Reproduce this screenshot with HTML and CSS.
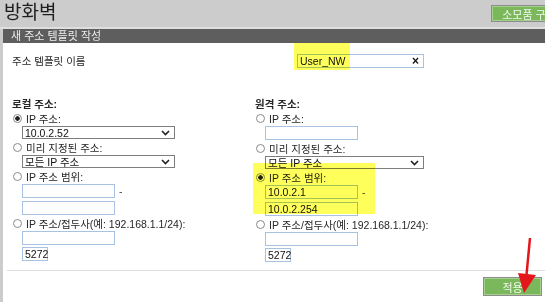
FILE: index.html
```html
<!DOCTYPE html>
<html lang="ko">
<head>
    <meta charset="UTF-8">
    <title>방화벽</title>
    <link rel="stylesheet" href="styles.css">
</head>
<body>
    <div class="top">
        <h1>방화벽</h1>
        <button class="btn-green top-btn">소모품 구매</button>
    </div>

    <div class="panel">
        <div class="panel-head">새 주소 템플릿 작성</div>

        <!-- template name -->
        <div class="name-row">
            <span>주소 템플릿 이름</span>
            <div class="text-box name-box">
                <span>User_NW</span>
                <span class="clear">×</span>
            </div>
        </div>

        <div class="cols">
            <!-- local -->
            <div class="col">
                <div class="col-title">로컬 주소:</div>
                <div class="opt"><span class="radio checked"></span>IP 주소:</div>
                <div class="fields">
                    <div class="select w153"><span>10.0.2.52</span><svg width="9" height="6" viewBox="0 0 9 6"><polyline points="1,1 4.5,4.5 8,1" fill="none" stroke="#222" stroke-width="1.6"/></svg></div>
                </div>
                <div class="opt"><span class="radio"></span>미리 지정된 주소:</div>
                <div class="fields">
                    <div class="select w153"><span>모든 IP 주소</span><svg width="9" height="6" viewBox="0 0 9 6"><polyline points="1,1 4.5,4.5 8,1" fill="none" stroke="#222" stroke-width="1.6"/></svg></div>
                </div>
                <div class="opt"><span class="radio"></span>IP 주소 범위:</div>
                <div class="fields">
                    <div class="range-row"><div class="text-box w93"></div><span class="dash">-</span></div>
                    <div class="text-box w93"></div>
                </div>
                <div class="opt"><span class="radio"></span>IP 주소/접두사(예: 192.168.1.1/24):</div>
                <div class="fields fields-tight">
                    <div class="text-box w93"></div>
                    <div class="text-box w26"><span>5272</span></div>
                </div>
            </div>

            <!-- remote -->
            <div class="col">
                <div class="col-title">원격 주소:</div>
                <div class="opt"><span class="radio"></span>IP 주소:</div>
                <div class="fields">
                    <div class="text-box w93"></div>
                </div>
                <div class="opt"><span class="radio"></span>미리 지정된 주소:</div>
                <div class="fields">
                    <div class="select w159"><span>모든 IP 주소</span><svg width="9" height="6" viewBox="0 0 9 6"><polyline points="1,1 4.5,4.5 8,1" fill="none" stroke="#222" stroke-width="1.6"/></svg></div>
                </div>
                <div class="opt"><span class="radio checked"></span>IP 주소 범위:</div>
                <div class="fields">
                    <div class="range-row"><div class="text-box w93"><span>10.0.2.1</span></div><span class="dash">-</span></div>
                    <div class="text-box w93"><span>10.0.2.254</span></div>
                </div>
                <div class="opt"><span class="radio"></span>IP 주소/접두사(예: 192.168.1.1/24):</div>
                <div class="fields fields-tight">
                    <div class="text-box w93"></div>
                    <div class="text-box w26"><span>5272</span></div>
                </div>
            </div>
        </div>

        <div class="actions">
            <button class="btn-green apply-btn">적용</button>
        </div>
    </div>

    <!-- annotations -->
    <div class="hl hl-name"></div>
    <div class="hl hl-range"></div>
    <svg class="arrow" width="545" height="302" viewBox="0 0 545 302">
        <line x1="530" y1="238" x2="526" y2="280" stroke="#e3161d" stroke-width="2.5"/>
        <polygon points="518,273 536,275 524,293" fill="#e3161d"/>
    </svg>
</body>
</html>
```

FILE: styles.css
```css
body {
    margin: 0;
    width: 545px;
    height: 302px;
    overflow: hidden;
    position: relative;
    background: #cccccc;
    font-family: "Liberation Sans", "Noto Sans CJK KR", sans-serif;
    font-size: 10.5px;
    color: #262626;
}
.top {
    height: 27px;
    display: flex;
    justify-content: space-between;
    align-items: flex-start;
    padding-left: 4px;
    border-bottom: 2px solid #dedede;
}
h1 {
    margin: 0;
    font-size: 19px;
    font-weight: normal;
    line-height: 25px;
    color: #1e1e1e;
}
.btn-green {
    background: #7bb85b;
    color: #f2f8ee;
    border: 1px solid #8c8c8c;
    box-shadow: inset 0 0 0 1px #a6d08e;
    font-family: inherit;
    font-size: 11px;
    padding: 0;
}
.top-btn {
    margin-top: 5px;
    margin-right: -22px;
    height: 17px;
    width: 76px;
}
.panel {
    margin-left: 3px;
    height: 273px;
    background: #ffffff;
    padding-left: 9px;
}
.panel-head {
    margin-left: -9px;
    height: 14px;
    line-height: 14px;
    padding-left: 8px;
    background: #5e5e5e;
    color: #eeeeee;
    font-size: 11px;
}
.name-row {
    display: grid;
    grid-template-columns: 285px auto;
    align-items: center;
    margin-top: 10px;
}
.text-box {
    box-sizing: border-box;
    height: 14px;
    border: 1px solid #a7c2e2;
    display: flex;
    align-items: center;
    padding-left: 2px;
    color: #111;
}
.name-box {
    width: 127px;
    justify-content: space-between;
    padding-right: 4px;
}
.clear {
    font-size: 12px;
    font-weight: bold;
}
.cols {
    display: grid;
    grid-template-columns: 243px 1fr;
    margin-top: 30px;
}
.col-title {
    font-weight: bold;
    line-height: 12px;
    margin-bottom: 1px;
}
.opt {
    display: flex;
    align-items: center;
    height: 15px;
}
.radio {
    box-sizing: border-box;
    width: 9px;
    height: 9px;
    margin: 0 4px 0 1px;
    border: 1px solid #8a8a8a;
    border-radius: 50%;
    background: #fff;
}
.radio.checked {
    background: radial-gradient(circle, #222 0 2px, #fff 2.5px);
}
.fields {
    display: flex;
    flex-direction: column;
    gap: 3px;
    padding-left: 10px;
    margin-bottom: 1px;
}
.fields-tight {
    gap: 2px;
}
.select {
    box-sizing: border-box;
    height: 13px;
    border: 1px solid #7d7d7d;
    display: flex;
    align-items: center;
    justify-content: space-between;
    padding: 0 4px 0 2px;
    color: #111;
}
.w153 { width: 153px; }
.w159 { width: 159px; }
.w93 { width: 93px; }
.w26 { width: 26px; }
.range-row {
    display: flex;
    align-items: center;
    gap: 4px;
}
.dash {
    color: #444;
}
.actions {
    margin-top: 7px;
    border-top: 1px solid #dddddd;
    margin-left: -5px;
    display: flex;
    justify-content: flex-end;
    padding-top: 6px;
    padding-right: 3px;
}
.apply-btn {
    width: 59px;
    height: 19px;
}
.hl {
    position: absolute;
    background: #ffff5c;
    mix-blend-mode: multiply;
}
.hl-name {
    left: 294px;
    top: 43px;
    width: 56px;
    height: 27px;
}
.hl-range {
    left: 253px;
    top: 163px;
    width: 122px;
    height: 51px;
}
.arrow {
    position: absolute;
    left: 0;
    top: 0;
}
```
